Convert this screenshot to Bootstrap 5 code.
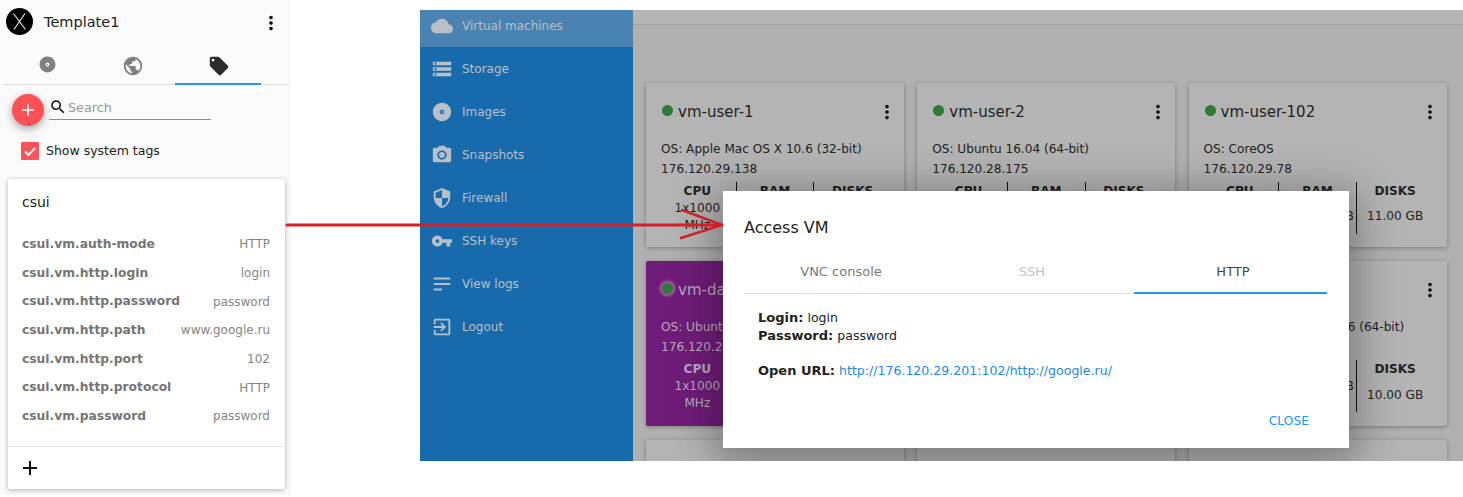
<!DOCTYPE html>
<html lang="en">
<head>
    <meta charset="UTF-8">
    <meta name="viewport" content="width=device-width, initial-scale=1.0">
    <title>Access VM</title>
    <link href="https://cdn.jsdelivr.net/npm/bootstrap@5.3.0/dist/css/bootstrap.min.css" rel="stylesheet">
    <style>
        html, body { height: 100%; }
        body { font-family: "DejaVu Sans", sans-serif; background: #fff; color: #222; overflow: hidden; }
        .ico { display: block; fill: currentColor; flex: none; }

        /* left panel */
        .tag-panel { width: 291px; height: 495px; background: #fafafa; flex: none; }
        .tag-head { height: 46px; padding: 8px 9px 0 6px; }
        .tag-logo { width: 27px; height: 27px; flex: none; }
        .tag-title { font-size: 14.5px; margin: 4px 0 0 11px; }
        .tag-tabs { margin: 0 2px 0 3px; height: 39px; border-bottom: 1px solid #ddd; }
        .tag-tab { width: 86px; height: 39px; color: #808080; display: flex; justify-content: center; align-items: flex-start; padding: 9px 0 0 2px; }
        .tag-tab.on { color: #2b2b2b; border-bottom: 2px solid #2196f3; }
        .tag-tools { height: 52px; padding-left: 12px; }
        .tag-fab { width: 32px; height: 32px; border-radius: 50%; background: #ff5257; color: #fff; box-shadow: 0 3px 8px rgba(0,0,0,.35); margin-top: 9px; flex: none; }
        .tag-search { width: 162px; height: 25px; margin: 10px 0 0 5px; border-bottom: 1px solid #8f8f8f; color: #999; font-size: 12.8px; }
        .tag-search span { padding: 2px 0 0 1px; }
        .tag-check { padding-left: 21px; font-size: 12.5px; height: 37px; margin-top: 5px; }
        .tag-box { width: 18px; height: 18px; background: #ff5257; border-radius: 1px; margin-right: 7px; color: #fff; }
        .tag-card { width: 277px; height: 310px; margin-left: 8px; border: 0; border-radius: 2px; box-shadow: 0 1px 5px rgba(0,0,0,.3); }
        .tag-name { font-size: 14px; padding: 13px 14px 0; height: 51px; }
        .tag-row { height: 28.67px; padding: 0 15px 0 14px; font-size: 12px; }
        .tag-key { font-weight: 700; color: #757575; font-size: 12.3px; }
        .tag-val { color: #858585; }
        .tag-add { border-top: 1px solid #e3e3e3; margin-top: 15px; padding: 9px 10px; color: #111; }

        /* right window */
        .vm-window { width: 1043px; height: 451px; margin: 10px 0 0 129px; overflow: hidden; }
        .vm-side { width: 213px; background: #176bad; color: #b9bfc6; font-size: 12px; flex: none; }
        .vm-link { height: 43px; padding-left: 11px; gap: 9px; }
        .vm-link:first-child { height: 37px; background: #4a83b2; padding-bottom: 5px; }
        .vm-main { background: #b0b0b0; min-width: 0; }
        .vm-bar { height: 15px; background: #b5b5b5; border-bottom: 1px solid #a0a0a0; }
        .vm-grid { display: grid; grid-template-columns: repeat(3, 258px); gap: 14px 13.25px; padding: 57.75px 0 0 13px; }
        .vm-card { height: 164.5px; background: #b4b4b4; border: 0; border-radius: 2px; box-shadow: 0 1px 4px rgba(0,0,0,.3); color: #222; font-size: 12.1px; }
        .vm-card.vm-purple { background: #6f1d78; color: #b9a9bc; }
        .vm-top { height: 56px; padding: 18px 6px 0 16px; }
        .vm-dot { width: 11px; height: 11px; border-radius: 50%; background: #2c7a34; margin-right: 5px; flex: none; }
        .vm-purple .vm-dot { box-shadow: 0 0 3px 2px rgba(230,200,230,.45); }
        .vm-name { font-size: 15px; }
        .vm-info { padding-left: 15px; line-height: 20px; height: 43px; white-space: nowrap; }
        .vm-stats { padding: 0 13px; height: 52px; }
        .vm-stat { flex: 1 1 0; text-align: center; display: flex; flex-direction: column; line-height: 17px; }
        .vm-stat + .vm-stat { border-left: 1px solid #111; }
        .vm-purple .vm-stat + .vm-stat { border-left-color: #4a1050; }
        .vm-stat b { padding-top: 1px; display: block; height: 18px; }
        .vm-stat span { flex: 1; display: flex; align-items: center; justify-content: center; white-space: nowrap; }
        .vm-stat span.vm-wrap { white-space: normal; }

        /* dialog over the list */
        .vm-dialog { position: absolute; left: 303px; top: 181px; width: 626px; height: 257px; background: #fff; box-shadow: 0 8px 40px 8px rgba(0,0,0,.32); padding: 27px 22px 0 21px; }
        .vm-dialog h5 { font-size: 16px; font-weight: 400; margin: 0; height: 35px; line-height: 20px; }
        .vm-tabs { height: 41px; border-bottom: 1px solid #ddd; font-size: 13px; }
        .vm-tab { flex: 0 0 194px; text-align: center; padding-top: 9px; color: #7a7a7a; }
        .vm-tab.off { flex-basis: 196px; color: #c6c6c6; padding-right: 8px; }
        .vm-tab.on { flex-basis: 193px; color: #444; border-bottom: 2px solid #2196f3; margin-bottom: -1px; padding-left: 5px; }
        .vm-access { padding: 15px 0 0 14px; font-size: 12.55px; line-height: 18px; color: #222; }
        .vm-access b { font-size: 13px; }
        .vm-access p { margin: 0 0 17px; }
        .vm-access a { color: #1e88e5; text-decoration: none; }
        .vm-close { position: absolute; right: 40px; bottom: 18px; color: #2196f3; font-size: 12.3px; }

        .vm-arrow { position: absolute; left: 0; top: 0; pointer-events: none; }
    </style>
</head>
<body class="position-relative">
    <svg width="0" height="0" class="position-absolute">
        <symbol id="i-disc" viewBox="0 0 24 24"><path d="M12 2C6.48 2 2 6.48 2 12s4.48 10 10 10 10-4.48 10-10S17.52 2 12 2zm0 12.5a2.5 2.5 0 1 1 0-5 2.5 2.5 0 0 1 0 5zm0-3.5c-.55 0-1 .45-1 1s.45 1 1 1 1-.45 1-1-.45-1-1-1z"/></symbol>
        <symbol id="i-globe" viewBox="0 0 24 24"><path d="M12 2C6.48 2 2 6.48 2 12s4.48 10 10 10 10-4.48 10-10S17.52 2 12 2zm-1 17.93c-3.95-.49-7-3.85-7-7.93 0-.62.08-1.21.21-1.79L9 15v1c0 1.1.9 2 2 2v1.93zm6.9-2.54c-.26-.81-1-1.39-1.9-1.39h-1v-3c0-.55-.45-1-1-1H8v-2h2c.55 0 1-.45 1-1V7h2c1.1 0 2-.9 2-2v-.41c2.93 1.19 5 4.06 5 7.41 0 2.08-.8 3.97-2.1 5.39z"/></symbol>
        <symbol id="i-tag" viewBox="0 0 24 24"><path d="M21.41 11.58l-9-9C12.05 2.22 11.55 2 11 2H4c-1.1 0-2 .9-2 2v7c0 .55.22 1.05.59 1.42l9 9c.36.36.86.58 1.41.58.55 0 1.05-.22 1.41-.59l7-7c.37-.36.59-.86.59-1.41 0-.55-.23-1.06-.59-1.42zM5.5 7C4.67 7 4 6.33 4 5.5S4.67 4 5.5 4 7 4.67 7 5.5 6.33 7 5.5 7z"/></symbol>
        <symbol id="i-more" viewBox="0 0 24 24"><path d="M12 8c1.1 0 2-.9 2-2s-.9-2-2-2-2 .9-2 2 .9 2 2 2zm0 2c-1.1 0-2 .9-2 2s.9 2 2 2 2-.9 2-2-.9-2-2-2zm0 6c-1.1 0-2 .9-2 2s.9 2 2 2 2-.9 2-2-.9-2-2-2z"/></symbol>
        <symbol id="i-add" viewBox="0 0 24 24"><path d="M19 13h-6v6h-2v-6H5v-2h6V5h2v6h6v2z"/></symbol>
        <symbol id="i-search" viewBox="0 0 24 24"><path d="M15.5 14h-.79l-.28-.27C15.41 12.59 16 11.11 16 9.5 16 5.91 13.09 3 9.5 3S3 5.91 3 9.5 5.91 16 9.5 16c1.61 0 3.09-.59 4.23-1.57l.27.28v.79l5 4.99L20.49 19l-4.99-5zm-6 0C7.01 14 5 11.99 5 9.5S7.01 5 9.5 5 14 7.01 14 9.5 11.99 14 9.5 14z"/></symbol>
        <symbol id="i-cloud" viewBox="0 0 24 24"><path d="M19.35 10.04C18.67 6.59 15.64 4 12 4 9.11 4 6.6 5.64 5.35 8.04 2.34 8.36 0 10.91 0 14c0 3.31 2.69 6 6 6h13c2.76 0 5-2.24 5-5 0-2.64-2.05-4.78-4.65-4.96z"/></symbol>
        <symbol id="i-storage" viewBox="0 0 24 24"><path d="M2 20h20v-4H2v4zm2-3h2v2H4v-2zM2 4v4h20V4H2zm4 3H4V5h2v2zm-4 7h20v-4H2v4zm2-3h2v2H4v-2z"/></symbol>
        <symbol id="i-camera" viewBox="0 0 24 24"><circle cx="12" cy="12" r="3.2"/><path d="M9 2L7.17 4H4c-1.1 0-2 .9-2 2v12c0 1.1.9 2 2 2h16c1.1 0 2-.9 2-2V6c0-1.1-.9-2-2-2h-3.17L15 2H9zm3 15c-2.76 0-5-2.24-5-5s2.24-5 5-5 5 2.24 5 5-2.24 5-5 5z"/></symbol>
        <symbol id="i-shield" viewBox="0 0 24 24"><path d="M12 1L3 5v6c0 5.55 3.84 10.74 9 12 5.16-1.26 9-6.45 9-12V5l-9-4zm0 10.99h7c-.53 4.12-3.28 7.79-7 8.94V12H5V6.3l7-3.11v8.8z"/></symbol>
        <symbol id="i-key" viewBox="0 0 24 24"><path d="M12.65 10C11.83 7.67 9.61 6 7 6c-3.31 0-6 2.69-6 6s2.69 6 6 6c2.61 0 4.83-1.67 5.65-4H17v4h4v-4h2v-4H12.65zM7 14c-1.1 0-2-.9-2-2s.9-2 2-2 2 .9 2 2-.9 2-2 2z"/></symbol>
        <symbol id="i-logs" viewBox="0 0 24 24"><path d="M3 5h18v2H3zM3 11h18v2H3zM3 17h9v2H3z"/></symbol>
        <symbol id="i-exit" viewBox="0 0 24 24"><path d="M10.09 15.59L11.5 17l5-5-5-5-1.41 1.41L12.67 11H3v2h9.67l-2.58 2.59zM19 3H5c-1.11 0-2 .9-2 2v4h2V5h14v14H5v-4H3v4c0 1.1.89 2 2 2h14c1.1 0 2-.9 2-2V5c0-1.1-.9-2-2-2z"/></symbol>
    </svg>

    <div class="d-flex">
        <!-- Tags panel -->
        <div class="tag-panel">
            <div class="tag-head d-flex align-items-start">
                <svg class="tag-logo" viewBox="0 0 27 27"><circle cx="13.5" cy="13.5" r="13.5" fill="#000"/><path d="M7.5 5.5 19.5 21.5M19 5.5 8 21.5" stroke="#eee" stroke-width="1.1" fill="none"/></svg>
                <span class="tag-title">Template1</span>
                <svg class="ico ms-auto mt-1" width="22" height="22" style="color:#111"><use href="#i-more"/></svg>
            </div>
            <div class="tag-tabs d-flex">
                <div class="tag-tab"><svg class="ico" width="19" height="19"><use href="#i-disc"/></svg></div>
                <div class="tag-tab"><svg class="ico" width="22" height="22"><use href="#i-globe"/></svg></div>
                <div class="tag-tab on"><svg class="ico" width="22" height="22"><use href="#i-tag"/></svg></div>
            </div>
            <div class="tag-tools d-flex align-items-start">
                <div class="tag-fab d-flex align-items-center justify-content-center"><svg class="ico" width="20" height="20"><use href="#i-add"/></svg></div>
                <div class="tag-search d-flex align-items-center">
                    <svg class="ico" width="18" height="18" style="color:#111"><use href="#i-search"/></svg><span>Search</span>
                </div>
            </div>
            <div class="tag-check d-flex align-items-start">
                <div class="tag-box d-flex align-items-center justify-content-center">
                    <svg width="14" height="14" viewBox="0 0 14 14"><path d="M2 7.5 5.5 11 12 4" stroke="#fff" stroke-width="2" fill="none"/></svg>
                </div>
                <span>Show system tags</span>
            </div>
            <div class="card tag-card">
                <div class="tag-name">csui</div>
                <div class="tag-row d-flex justify-content-between align-items-center"><span class="tag-key">csui.vm.auth-mode</span><span class="tag-val">HTTP</span></div>
                <div class="tag-row d-flex justify-content-between align-items-center"><span class="tag-key">csui.vm.http.login</span><span class="tag-val">login</span></div>
                <div class="tag-row d-flex justify-content-between align-items-center"><span class="tag-key">csui.vm.http.password</span><span class="tag-val">password</span></div>
                <div class="tag-row d-flex justify-content-between align-items-center"><span class="tag-key">csui.vm.http.path</span><span class="tag-val">www.google.ru</span></div>
                <div class="tag-row d-flex justify-content-between align-items-center"><span class="tag-key">csui.vm.http.port</span><span class="tag-val">102</span></div>
                <div class="tag-row d-flex justify-content-between align-items-center"><span class="tag-key">csui.vm.http.protocol</span><span class="tag-val">HTTP</span></div>
                <div class="tag-row d-flex justify-content-between align-items-center"><span class="tag-key">csui.vm.password</span><span class="tag-val">password</span></div>
                <div class="tag-add"><svg class="ico" width="24" height="24"><use href="#i-add"/></svg></div>
            </div>
        </div>

        <!-- VM list with the dialog open -->
        <div class="vm-window d-flex position-relative">
            <div class="vm-side">
                <div class="vm-link d-flex align-items-center"><svg class="ico" width="22" height="22"><use href="#i-cloud"/></svg>Virtual machines</div>
                <div class="vm-link d-flex align-items-center"><svg class="ico" width="22" height="22"><use href="#i-storage"/></svg>Storage</div>
                <div class="vm-link d-flex align-items-center"><svg class="ico" width="22" height="22"><use href="#i-disc"/></svg>Images</div>
                <div class="vm-link d-flex align-items-center"><svg class="ico" width="22" height="22"><use href="#i-camera"/></svg>Snapshots</div>
                <div class="vm-link d-flex align-items-center"><svg class="ico" width="22" height="22"><use href="#i-shield"/></svg>Firewall</div>
                <div class="vm-link d-flex align-items-center"><svg class="ico" width="22" height="22"><use href="#i-key"/></svg>SSH keys</div>
                <div class="vm-link d-flex align-items-center"><svg class="ico" width="22" height="22"><use href="#i-logs"/></svg>View logs</div>
                <div class="vm-link d-flex align-items-center"><svg class="ico" width="22" height="22"><use href="#i-exit"/></svg>Logout</div>
            </div>
            <div class="vm-main flex-grow-1">
                <div class="vm-bar"></div>
                <div class="vm-grid">
                    <div class="card vm-card">
                        <div class="vm-top d-flex align-items-start"><i class="vm-dot mt-1"></i><span class="vm-name">vm-user-1</span><svg class="ico ms-auto" width="22" height="22" style="color:#111"><use href="#i-more"/></svg></div>
                        <div class="vm-info">OS: Apple Mac OS X 10.6 (32-bit)<br>176.120.29.138</div>
                        <div class="vm-stats d-flex">
                            <div class="vm-stat"><b>CPU</b><span class="vm-wrap">1x1000<br>MHz</span></div>
                            <div class="vm-stat"><b>RAM</b><span class="invisible">1024.00 MB</span></div>
                            <div class="vm-stat"><b>DISKS</b><span class="invisible">11.00 GB</span></div>
                        </div>
                    </div>
                    <div class="card vm-card">
                        <div class="vm-top d-flex align-items-start"><i class="vm-dot mt-1"></i><span class="vm-name">vm-user-2</span><svg class="ico ms-auto" width="22" height="22" style="color:#111"><use href="#i-more"/></svg></div>
                        <div class="vm-info">OS: Ubuntu 16.04 (64-bit)<br>176.120.28.175</div>
                        <div class="vm-stats d-flex">
                            <div class="vm-stat"><b>CPU</b><span class="invisible">1x1000</span></div>
                            <div class="vm-stat"><b>RAM</b><span class="invisible">1024.00 MB</span></div>
                            <div class="vm-stat"><b>DISKS</b><span class="invisible">10.00 GB</span></div>
                        </div>
                    </div>
                    <div class="card vm-card">
                        <div class="vm-top d-flex align-items-start"><i class="vm-dot mt-1"></i><span class="vm-name">vm-user-102</span><svg class="ico ms-auto" width="22" height="22" style="color:#111"><use href="#i-more"/></svg></div>
                        <div class="vm-info">OS: CoreOS<br>176.120.29.78</div>
                        <div class="vm-stats d-flex">
                            <div class="vm-stat"><b>CPU</b><span class="invisible">1x1000</span></div>
                            <div class="vm-stat"><b>RAM</b><span>1024.00 MB</span></div>
                            <div class="vm-stat"><b>DISKS</b><span>11.00 GB</span></div>
                        </div>
                    </div>
                    <div class="card vm-card vm-purple">
                        <div class="vm-top d-flex align-items-start"><i class="vm-dot mt-1"></i><span class="vm-name">vm-da</span></div>
                        <div class="vm-info">OS: Ubunt<br>176.120.2</div>
                        <div class="vm-stats d-flex">
                            <div class="vm-stat"><b>CPU</b><span class="vm-wrap">1x1000<br>MHz</span></div>
                            <div class="vm-stat"></div>
                            <div class="vm-stat"></div>
                        </div>
                    </div>
                    <div class="card vm-card"></div>
                    <div class="card vm-card">
                        <div class="vm-top d-flex align-items-start"><span class="ms-auto"></span><svg class="ico" width="22" height="22" style="color:#111"><use href="#i-more"/></svg></div>
                        <div class="vm-info">OS: Apple Mac OS X 10.6 (64-bit)</div>
                        <div class="vm-stats d-flex">
                            <div class="vm-stat"></div>
                            <div class="vm-stat"><span>1024.00 MB</span></div>
                            <div class="vm-stat"><b>DISKS</b><span>10.00 GB</span></div>
                        </div>
                    </div>
                    <div class="card vm-card"></div>
                    <div class="card vm-card"></div>
                    <div class="card vm-card"></div>
                </div>
            </div>

            <div class="vm-dialog">
                <h5>Access VM</h5>
                <div class="vm-tabs d-flex">
                    <div class="vm-tab">VNC console</div>
                    <div class="vm-tab off">SSH</div>
                    <div class="vm-tab on">HTTP</div>
                </div>
                <div class="vm-access">
                    <p><b>Login:</b> login<br><b>Password:</b> password</p>
                    <p><b>Open URL:</b> <a href="#">http://176.120.29.201:102/http://google.ru/</a></p>
                </div>
                <div class="vm-close">CLOSE</div>
            </div>
        </div>
    </div>

    <!-- red arrow from the tag card to the dialog -->
    <svg class="vm-arrow" width="1463" height="497">
        <g fill="none" stroke="#d32027" stroke-width="3" stroke-linecap="round" stroke-linejoin="round">
            <path d="M287 225H722"/>
            <path d="M682 210 722 225 681 238" stroke-width="2.5"/>
        </g>
    </svg>
</body>
</html>
